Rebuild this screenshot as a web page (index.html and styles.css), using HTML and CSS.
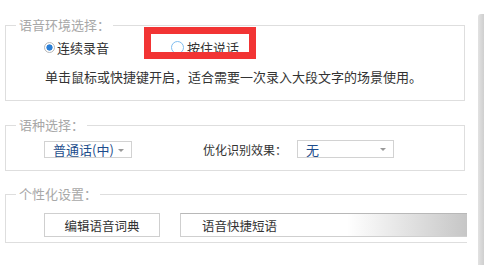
FILE: index.html
```html
<!DOCTYPE html>
<html lang="zh-CN">
<head>
    <meta charset="UTF-8">
    <title>语音设置</title>
    <link rel="stylesheet" href="styles.css">
</head>
<body>
    <div class="page">
        <fieldset class="group env">
            <legend>语音环境选择：</legend>
            <div class="radio-row">
                <label class="option"><span class="radio checked"></span>连续录音</label>
                <label class="option marked"><span class="radio"></span>按住说话<span class="mark"></span></label>
            </div>
            <p class="hint">单击鼠标或快捷键开启，适合需要一次录入大段文字的场景使用。</p>
        </fieldset>

        <fieldset class="group lang">
            <legend>语种选择：</legend>
            <div class="select-row">
                <div class="dropdown lang-select">普通话(中)<span class="arrow"></span></div>
                <span class="field-label">优化识别效果：</span>
                <div class="dropdown effect-select">无<span class="arrow"></span></div>
            </div>
        </fieldset>

        <fieldset class="group personal">
            <legend>个性化设置：</legend>
            <div class="button-row">
                <button type="button" class="btn">编辑语音词典</button>
                <button type="button" class="btn btn-wide">语音快捷短语</button>
            </div>
        </fieldset>
    </div>
    <div class="scrollbar"></div>
</body>
</html>
```

FILE: styles.css
```css
body {
    margin: 0;
    background-color: #fff;
    font-family: "Noto Sans CJK SC", "Liberation Sans", sans-serif;
    color: #333;
    display: flex;
    height: 265px;
    overflow: hidden;
}
.page {
    width: 476px;
    padding-top: 17px;
}
.group {
    margin: 0 0 0 5px;
    width: 460px;
    padding: 0;
    border: 1px solid #dedede;
    box-sizing: border-box;
}
.group legend {
    margin-left: 10px;
    padding: 0 3px;
    font-size: 13px;
    line-height: 16px;
    color: #a8a8a8;
}
.radio-row {
    display: flex;
    align-items: center;
    height: 20px;
    margin-top: 4px;
    padding-left: 38px;
    font-size: 13px;
}
.option {
    display: flex;
    align-items: center;
    position: relative;
}
.option.marked {
    margin-left: 62px;
}
.radio {
    width: 11px;
    height: 11px;
    border: 1px solid #9cc8ee;
    border-radius: 50%;
    margin-right: 2px;
    box-sizing: border-box;
    background: #fff;
}
.radio.checked {
    border-color: #b8b8b8;
    background: radial-gradient(circle, #2b7fd6 0, #2b7fd6 2.8px, #fff 3.4px);
}
.marked .radio {
    width: 13px;
    height: 13px;
    border: 1.5px solid #7fbdf0;
    margin-right: 3px;
}
.mark {
    position: absolute;
    left: -27px;
    top: -11px;
    width: 112px;
    height: 32px;
    border: 7px solid #f23434;
    box-sizing: border-box;
}
.hint {
    margin: 11px 0 0 39px;
    padding-bottom: 14px;
    font-size: 13px;
    line-height: 18px;
}
.lang {
    margin-top: 16px;
}
.select-row {
    display: flex;
    align-items: center;
    height: 18px;
    margin-top: 7px;
    padding: 0 0 12px 38px;
}
.dropdown {
    position: relative;
    display: flex;
    align-items: center;
    height: 15px;
    border: 1px solid #d2d2d2;
    box-sizing: content-box;
    font-size: 13px;
    color: #1d4d8c;
    padding-left: 8px;
}
.lang-select {
    width: 78px;
}
.effect-select {
    width: 87px;
    height: 16px;
}
.arrow {
    position: absolute;
    right: 7px;
    top: 7px;
    border-left: 3px solid transparent;
    border-right: 3px solid transparent;
    border-top: 3px solid #999;
}
.field-label {
    margin-left: 71px;
    margin-right: 10px;
    font-size: 12px;
}
.personal {
    margin-top: 15px;
    width: 462px;
    border-right: none;
}
.button-row {
    display: flex;
    gap: 20px;
    margin-top: 11px;
    padding: 0 0 5px 38px;
}
.btn {
    height: 24px;
    width: 116px;
    border: 1px solid #cfcfcf;
    background: #fff;
    font-family: inherit;
    font-size: 12.5px;
    color: #333;
    padding: 0;
}
.btn-wide {
    flex: 1;
    text-align: left;
    padding-left: 21px;
    border-top-color: #b8b8b8;
    border-right: none;
    background: linear-gradient(to right, #fff 0, #fff 58%, #c6c6c6 100%);
}
.scrollbar {
    width: 6px;
    margin: 14px 0 0 3px;
    background: linear-gradient(to right, #e2e2e2, #cfcfcf);
    border-radius: 3px 0 0 0;
}
```
